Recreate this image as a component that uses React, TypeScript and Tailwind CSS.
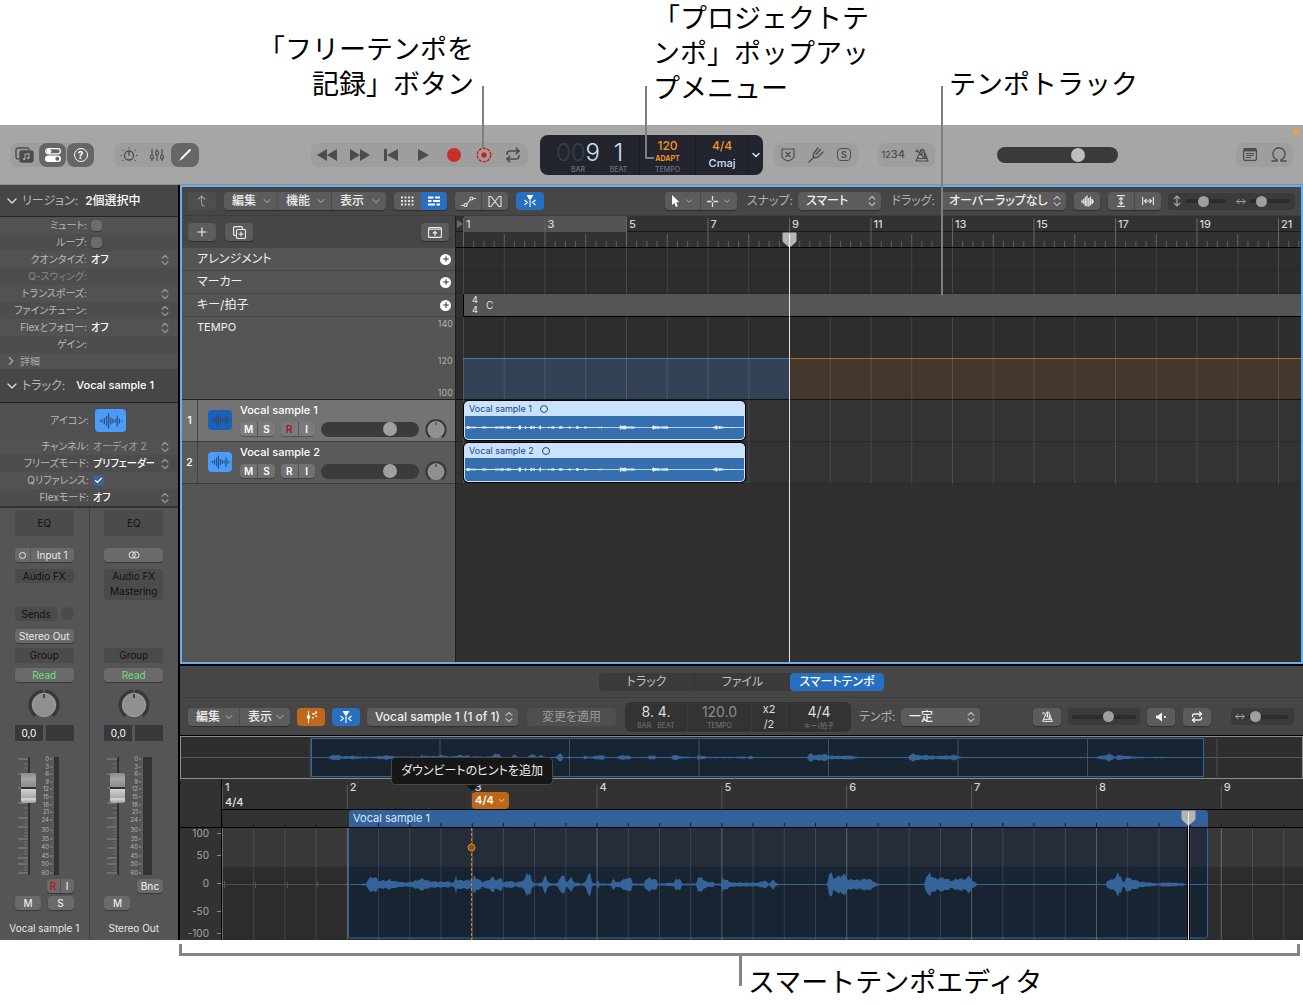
import React from "react";
import { Check, ChevronDown, ChevronRight, ChevronsUpDown, Plus, Repeat } from "lucide-react";

const BAR_WIDTH = 40.75;
const EDITOR_BAR_WIDTH = 124.85;

// [x, amplitude] pairs of the recorded audio, in editor pixels
const envelope: [number, number][] = [
  [128, 0], [144, 1], [146, 5], [150, 8], [154, 7], [157, 4], [163, 4], [168, 5], [174, 3], [186, 2], [193, 4],
  [200, 6], [206, 4], [212, 3], [226, 3], [231, 2], [233, 4], [234, 13], [235, 5], [240, 4], [249, 5], [250, 4],
  [252, 8], [256, 6], [260, 3], [266, 4], [270, 8], [274, 5], [280, 6], [281, 2], [288, 4], [293, 2], [298, 3],
  [302, 5], [305, 11], [308, 12], [310, 3], [314, 1], [320, 2], [323, 9], [327, 2], [330, 1], [336, 2], [339, 10],
  [342, 9], [344, 2], [349, 7], [353, 2], [360, 1], [363, 2], [366, 11], [368, 12], [370, 2], [374, 1], [376, 4],
  [378, 1], [389, 1], [391, 7], [394, 2], [400, 4], [404, 7], [409, 6], [411, 1], [422, 1], [423, 5], [428, 7],
  [434, 5], [436, 1], [452, 2], [454, 6], [458, 6], [460, 1], [474, 1], [476, 8], [481, 6], [486, 2], [490, 3],
  [493, 1], [499, 1], [500, 7], [506, 4], [510, 2], [536, 2], [543, 4], [547, 1], [551, 5], [555, 1], [560, 0],
  [605, 0], [607, 11], [609, 12], [612, 7], [616, 8], [620, 10], [624, 10], [626, 5], [632, 5], [638, 5], [646, 6],
  [651, 4], [655, 1], [668, 0], [702, 0], [704, 8], [708, 11], [711, 8], [714, 6], [718, 7], [724, 6], [730, 4],
  [736, 6], [744, 6], [748, 9], [750, 4], [755, 1], [758, 0], [884, 0], [885, 4], [890, 5], [894, 8], [896, 12],
  [899, 9], [901, 2], [903, 3], [904, 9], [908, 6], [912, 5], [918, 3], [928, 2], [936, 1], [940, 2], [950, 2],
  [962, 1], [966, 0], [986, 0],
];

const wavePath = (offsetX: number, scaleX: number, centerY: number, scaleY: number, minHeight: number) => {
  const top: string[] = [];
  const bottom: string[] = [];
  let segment = 0;
  for (let x = envelope[0][0]; x <= 986; x += 1) {
    while (segment < envelope.length - 2 && x > envelope[segment + 1][0]) segment += 1;
    const [x0, a0] = envelope[segment];
    const [x1, a1] = envelope[segment + 1];
    const amp = a0 + ((a1 - a0) * (x - x0)) / (x1 - x0);
    const noise = 0.75 + (((x * 7919) % 13) / 13) * 0.4;
    const h = Math.max(minHeight, amp * noise * scaleY);
    const px = (offsetX + x * scaleX).toFixed(1);
    top.push(`${px} ${(centerY - h).toFixed(1)}`);
    bottom.unshift(`${px} ${(centerY + h).toFixed(1)}`);
  }
  return `M${top.join("L")}L${bottom.join("L")}Z`;
};

const range = (count: number) => Array.from({ length: count }, (_, i) => i);

const raised = "bg-[#5c5c5c] shadow-[0_1px_1px_rgba(0,0,0,0.35)]";
const sliderBase =
  "m-0 appearance-none rounded-full [&::-webkit-slider-thumb]:appearance-none [&::-webkit-slider-thumb]:rounded-full";

const VoiceIcon = ({ className }: { className: string }) => (
  <svg viewBox="0 0 24 16" className={className} fill="none" stroke="currentColor" strokeLinecap="round" strokeWidth="1.3">
    <path d="M1 8h.2M3.2 7v2M5.4 5.5v5M7.6 3.5v9M9.6 1v14M11.8 5v6M14 6.2v3.6M16.2 7v2M18.2 3v10M20.3 6v4M22.8 7.8v.4" />
  </svg>
);

const ZoomWaveIcon = () => (
  <svg viewBox="0 0 13 13" className="h-[13px] w-[13px]" fill="none" stroke="currentColor" strokeWidth="1.4">
    <path d="M.7 5.500v2M2.500 4v5M4.300 2v9M6 .5v11M7.800 3v8.500M9.500 1.500v9M11.200 4v5M12.600 5.500v2" />
  </svg>
);

const FlexIcon = () => (
  <svg viewBox="0 0 14 14" className="h-[14px] w-[14px]" fill="none" stroke="currentColor" strokeWidth="1.1">
    <path d="M7 2v11" />
    <path d="M4.500 1.500h5L7.800 4.500H6.200z" fill="currentColor" />
    <path d="M1.500 6l3 2.500-3 2.500M12.500 6l-3 2.500 3 2.500" />
  </svg>
);

const MetronomeIcon = ({ className }: { className: string }) => (
  <svg viewBox="0 0 16 16" className={className} fill="none" stroke="currentColor" strokeWidth="1.2" strokeLinejoin="round">
    <path d="M7 2.5h2.5L14 14H2l4-9zM3 11.5h10M10.5 11 2.5 3M1.5 5 4 2.5M8 3v6M10 5l1 6" />
  </svg>
);

const HorizontalArrows = ({ className }: { className: string }) => (
  <svg viewBox="0 0 12 8" className={className} fill="none" stroke="currentColor" strokeWidth="1.2">
    <path d="M1 4h10M4 1 1 4l3 3M8 1l3 3-3 3" />
  </svg>
);

const Knob = ({ className }: { className: string }) => (
  <svg viewBox="0 0 32 32" className={className}>
    <path d="M7.5 28A14 14 0 1 1 24.500 28" fill="none" stroke="#383838" strokeWidth="3" />
    <circle cx="16" cy="17" r="11.500" fill="#909090" stroke="#a5a5a5" strokeWidth="1" />
    <path d="M16 6v4" stroke="#111" strokeWidth="1.2" />
    <path d="M16 1v4" stroke="#3f8a4a" strokeWidth="1" />
  </svg>
);

interface ToolButtonProps {
  label: string;
  className: string;
  children: React.ReactNode;
}

const ToolButton: React.FC<ToolButtonProps> = ({ label, className, children }) => (
  <button type="button" aria-label={label} className={`flex shrink-0 items-center justify-center ${className}`}>
    {children}
  </button>
);

interface PopupProps {
  label: string;
  value: string;
  className: string;
}

const Popup: React.FC<PopupProps> = ({ label, value, className }) => (
  <div className={`flex h-[18px] shrink-0 items-center rounded pr-[2px] pl-2 ${raised} ${className}`}>
    <select aria-label={label} className="h-[18px] min-w-0 flex-1 appearance-none bg-transparent text-xs leading-[18px] font-medium text-[#f0f0f0] outline-none">
      <option>{value}</option>
    </select>
    <ChevronsUpDown className="h-[14px] w-[14px] shrink-0 text-[#b5b5b5]" />
  </div>
);

const MenuButton = ({ name, className }: { name: string; className: string }) => (
  <button type="button" className={`flex h-[18px] items-center justify-between pr-1 pl-2 text-xs font-medium text-[#ececec] ${className}`}>
    {name}
    <ChevronDown className="h-3 w-3 text-[#b5b5b5]" />
  </button>
);

const ControlBar = () => (
  <div className="flex h-[60px] items-center border-b border-[#8f8f8f] bg-[#a6a6a6] pr-[10px] pl-[10px] text-[#4c4c4c]">
    <div className="flex h-6 shrink-0 items-center rounded-lg bg-[#9e9e9e]">
      <ToolButton label="ライブラリ" className="h-6 w-[29px]">
        <svg viewBox="0 0 20 16" className="h-4 w-5" fill="none" stroke="currentColor" strokeWidth="1.4">
          <path d="M4 12H3a2 2 0 0 1-2-2V3a2 2 0 0 1 2-2h9a2 2 0 0 1 2 2" />
          <rect x="5" y="4" width="13" height="11" rx="2" fill="currentColor" />
          <path d="M10 12V7.500l4-1V11" stroke="#a6a6a6" strokeWidth="1.1" />
          <circle cx="9.200" cy="12" r="1.200" fill="#a6a6a6" stroke="none" />
          <circle cx="13.200" cy="11" r="1.200" fill="#a6a6a6" stroke="none" />
        </svg>
      </ToolButton>
      <ToolButton label="インスペクタ" className="h-6 w-[27px] rounded-lg bg-[#666] text-white">
        <svg viewBox="0 0 16 14" className="h-[14px] w-4">
          <rect x=".7" y=".7" width="14.600" height="5.200" rx="2.600" fill="none" stroke="currentColor" strokeWidth="1.2" />
          <circle cx="4" cy="3.300" r="2.300" fill="currentColor" />
          <rect x="0" y="7.500" width="16" height="6.500" rx="3.200" fill="currentColor" />
          <circle cx="12.300" cy="10.700" r="2" fill="#666" />
        </svg>
      </ToolButton>
      <ToolButton label="クイックヘルプ" className="ml-[1px] h-6 w-[27px] rounded-lg bg-[#666] text-white">
        <span className="flex h-[14px] w-[14px] items-center justify-center rounded-full border border-white text-[10px] leading-none font-bold">?</span>
      </ToolButton>
    </div>

    <div className="ml-5 flex h-6 shrink-0 items-center rounded-lg bg-[#9e9e9e]">
      <ToolButton label="スマートコントロール" className="h-6 w-[29px]">
        <svg viewBox="0 0 18 16" className="h-4 w-[18px]" fill="none" stroke="currentColor" strokeWidth="1.3" strokeLinecap="round">
          <circle cx="9" cy="8.500" r="4.500" />
          <path d="M9 4v4.500M1.200 8.500h.1M16.700 8.500h.1M3 3.200h.1M15 3.200h.1M9 1h.1M3 13.500h.1M15 13.500h.1" />
        </svg>
      </ToolButton>
      <ToolButton label="ミキサー" className="h-6 w-[28px]">
        <svg viewBox="0 0 16 16" className="h-4 w-4" fill="#9e9e9e" stroke="currentColor" strokeWidth="1.2">
          <path d="M3 2v12M8 2v12M13 2v12" />
          <ellipse cx="3" cy="10" rx="1.500" ry="2" />
          <ellipse cx="8" cy="6" rx="1.500" ry="2" />
          <ellipse cx="13" cy="10" rx="1.500" ry="2" />
        </svg>
      </ToolButton>
      <ToolButton label="エディタ" className="h-6 w-[28px] rounded-lg bg-[#666] text-white">
        <svg viewBox="0 0 14 14" className="h-[14px] w-[14px]" stroke="currentColor" strokeLinecap="round">
          <path d="M3.500 10.500 12 2" strokeWidth="2" />
          <path d="m1.800 12.200.8-.8" strokeWidth="1" />
        </svg>
      </ToolButton>
    </div>

    <div className="ml-28 flex h-6 w-[217px] shrink-0 items-center rounded-lg bg-[#9e9e9e]">
      <ToolButton label="巻き戻し" className="h-6 w-8">
        <svg viewBox="0 0 20 12" className="h-3 w-5" fill="currentColor"><path d="M10 0v12L0 6zM20 0v12L10 6z" /></svg>
      </ToolButton>
      <ToolButton label="早送り" className="h-6 w-[33px]">
        <svg viewBox="0 0 20 12" className="h-3 w-5" fill="currentColor"><path d="M0 0v12l10-6zM10 0v12l10-6z" /></svg>
      </ToolButton>
      <ToolButton label="先頭へ" className="h-6 w-[30px]">
        <svg viewBox="0 0 14 12" className="h-3 w-[14px]" fill="currentColor"><path d="M0 0h3v12H0zM14 0v12L3 6z" /></svg>
      </ToolButton>
      <ToolButton label="再生" className="h-6 w-[33px]">
        <svg viewBox="0 0 12 12" className="h-3 w-3" fill="currentColor"><path d="M1 0v12l11-6z" /></svg>
      </ToolButton>
      <ToolButton label="録音" className="h-6 w-[30px]">
        <span className="h-[14px] w-[14px] rounded-full bg-[#cd2d27]" />
      </ToolButton>
      <ToolButton label="フリーテンポを記録" className="h-6 w-[29px]">
        <svg viewBox="0 0 16 16" className="h-4 w-4" fill="none" stroke="#cd2019">
          <circle cx="8" cy="8" r="6.700" strokeWidth="1.4" strokeDasharray="3.2 1.1" />
          <circle cx="8" cy="8" r="2.700" fill="#cd2019" stroke="none" />
        </svg>
      </ToolButton>
      <ToolButton label="サイクル" className="h-6 w-[29px]">
        <Repeat className="h-4 w-4" strokeWidth={2.4} />
      </ToolButton>
    </div>

    <div className="ml-3 flex h-10 w-[223px] shrink-0 rounded-lg bg-[#22252e] text-[#d3e0f5]">
      <div className="flex w-[100px] justify-end border-r border-[#1a1c23]">
        <div className="flex flex-col items-end">
          <span className="mt-[5px] text-2xl leading-[26px] font-light"><span className="text-[#3a3e49]">00</span>9</span>
          <span className="pr-[15px] text-[7px] leading-[7px] font-medium text-[#6a7282]">BAR</span>
        </div>
        <div className="flex w-[37px] flex-col items-center">
          <span className="mt-[5px] text-2xl leading-[26px] font-light">1</span>
          <span className="text-[7px] leading-[7px] font-medium text-[#6a7282]">BEAT</span>
        </div>
        <div className="w-[2px]" />
      </div>
      <div className="flex w-[56px] flex-col items-center border-r border-[#1a1c23] pt-[3px]">
        <span className="text-xs leading-4 font-medium text-[#f39325]">120</span>
        <button type="button" className="text-[7px] leading-[9px] font-bold text-[#f39325]">ADAPT</button>
        <span className="pt-[3px] text-[7px] leading-[7px] font-medium text-[#6a7282]">TEMPO</span>
      </div>
      <div className="flex w-[53px] flex-col items-center border-r border-[#1a1c23] pt-[3px]">
        <span className="text-xs leading-4 font-medium text-[#f39325]">4/4</span>
        <span className="pt-[1px] text-[11px] leading-[17px] font-medium">Cmaj</span>
      </div>
      <ToolButton label="表示モード" className="w-[14px]">
        <ChevronDown className="h-3 w-3" strokeWidth={3} />
      </ToolButton>
    </div>

    <div className="ml-[11px] flex h-6 w-[84px] shrink-0 items-center justify-around rounded-lg bg-[#9e9e9e]">
      <ToolButton label="リプレース" className="h-6 w-6">
        <svg viewBox="0 0 14 14" className="h-[14px] w-[14px]" fill="none" stroke="currentColor" strokeWidth="1.2">
          <path d="M1 1h12v7q0 3-6 5-6-2-6-5zM4.500 4l5 5M9.500 4l-5 5" />
        </svg>
      </ToolButton>
      <ToolButton label="チューナー" className="h-6 w-6">
        <svg viewBox="0 0 16 16" className="h-4 w-4" fill="none" stroke="currentColor" strokeWidth="1.4" strokeLinecap="round">
          <path d="M1 15l5-5M10 1 6 6q-1.500 2.500 0 4t4 0l5-5M12.500 2.500 8 7.500" />
        </svg>
      </ToolButton>
      <ToolButton label="ソロ" className="h-6 w-6">
        <span className="flex h-[13px] w-[14px] items-center justify-center rounded-sm border border-[#4c4c4c] text-[9px] leading-none font-semibold">S</span>
      </ToolButton>
    </div>

    <div className="ml-5 flex h-6 w-[57px] shrink-0 items-center justify-around rounded-lg bg-[#9e9e9e]">
      <ToolButton label="カウントイン" className="h-6 w-7">
        <span className="text-[9px] font-medium">12<span className="text-[11px]">34</span></span>
      </ToolButton>
      <ToolButton label="メトロノーム" className="h-6 w-6">
        <MetronomeIcon className="h-4 w-4" />
      </ToolButton>
    </div>

    <input
      type="range"
      aria-label="マスター音量"
      defaultValue={69}
      className={`ml-[62px] h-4 w-[121px] shrink-0 bg-[#3a3a3a] ${sliderBase} [&::-webkit-slider-thumb]:h-[14px] [&::-webkit-slider-thumb]:w-[14px] [&::-webkit-slider-thumb]:bg-[#bfbfbf]`}
    />

    <div className="ml-auto flex h-6 w-[57px] shrink-0 items-center justify-around rounded-lg bg-[#9e9e9e]">
      <ToolButton label="リスト" className="h-6 w-6">
        <svg viewBox="0 0 14 13" className="h-[13px] w-[14px]" fill="none" stroke="currentColor" strokeWidth="1.2">
          <rect x=".6" y=".6" width="12.800" height="11.800" rx="1.500" />
          <path d="M1 2.200h12" strokeWidth="2.4" />
          <path d="M3 5.500h8M3 7.500h8M3 9.500h5" strokeWidth="1" />
        </svg>
      </ToolButton>
      <ToolButton label="ループブラウザ" className="h-6 w-6">
        <svg viewBox="0 0 16 15" className="h-[15px] w-4" fill="none" stroke="currentColor" strokeWidth="1.3" strokeLinecap="round">
          <path d="M1 14h4.500q1 0 .5-1.200a6.200 6.200 0 1 1 4 0q-.5 1.200.5 1.200H15" />
        </svg>
      </ToolButton>
    </div>
  </div>
);

const InspectorSelect = ({ label, value, dim }: { label: string; value?: string; dim?: boolean }) => (
  <>
    <select
      id={label}
      defaultValue={value ?? ""}
      className={`h-[17px] min-w-0 flex-1 appearance-none bg-transparent text-[10px] leading-[17px] outline-none ${dim ? "text-[#a0a0a0]" : "font-medium text-white"}`}
    >
      <option>{value ?? ""}</option>
    </select>
    <ChevronsUpDown className="h-[14px] w-[14px] shrink-0 text-[#999]" />
  </>
);

const InspectorRow = ({ label, wide, children }: { label: string; wide?: boolean; children?: React.ReactNode }) => (
  <div className="flex h-[17px] items-center gap-1 pr-[6px] odd:bg-[#525252] even:bg-[#4d4d4d]">
    <label htmlFor={label} className={`shrink-0 text-right whitespace-nowrap ${wide ? "w-[89px]" : "w-[87px]"} ${label === "Q-スウィング" ? "text-[#858585]" : "text-[#b9b9b9]"}`}>
      {label}:
    </label>
    {children}
  </div>
);

const Inspector = () => (
  <div className="bg-[#505050] text-[10px]">
    <div className="flex h-8 items-center border-b border-[#222] bg-[#464646] pl-1 text-xs">
      <ChevronDown className="h-4 w-4 text-[#ddd]" />
      <span className="pl-[2px] text-[#b9b9b9]">リージョン:</span>
      <span className="pl-[7px] font-medium text-white">2個選択中</span>
    </div>
    <div>
      {["ミュート", "ループ"].map((label) => (
        <InspectorRow key={label} label={label}>
          <input id={label} type="checkbox" className="h-[11px] w-[11px] appearance-none rounded-sm bg-[#6c6c6c] shadow-[0_1px_1px_rgba(0,0,0,0.3)]" />
        </InspectorRow>
      ))}
      <InspectorRow label="クオンタイズ"><InspectorSelect label="クオンタイズ" value="オフ" /></InspectorRow>
      <InspectorRow label="Q-スウィング" />
      <InspectorRow label="トランスポーズ"><InspectorSelect label="トランスポーズ" /></InspectorRow>
      <InspectorRow label="ファインチューン"><InspectorSelect label="ファインチューン" /></InspectorRow>
      <InspectorRow label="Flexとフォロー"><InspectorSelect label="Flexとフォロー" value="オフ" /></InspectorRow>
      <InspectorRow label="ゲイン" />
      <button type="button" className="flex h-4 w-full items-center gap-[2px] bg-[#525252] pl-1 text-[#aaa]">
        <ChevronRight className="h-[14px] w-[14px]" />
        詳細
      </button>
    </div>
    <div className="flex h-[34px] items-center border-b border-[#222] bg-[#464646] pl-1 text-xs">
      <ChevronDown className="h-4 w-4 text-[#ddd]" />
      <span className="pl-[2px] text-[#b9b9b9]">トラック:</span>
      <span className="pl-[11px] text-[11px] font-medium text-white">Vocal sample 1</span>
    </div>
    <div className="flex h-[35px] items-center gap-[6px]">
      <span className="w-[89px] text-right text-[#b9b9b9]">アイコン:</span>
      <ToolButton label="アイコン" className="h-[23px] w-[31px] rounded-sm bg-[#4b9cf8] text-[#2c4f86]">
        <VoiceIcon className="h-4 w-6" />
      </ToolButton>
    </div>
    <div>
      <InspectorRow label="チャンネル" wide><InspectorSelect label="チャンネル" value="オーディオ 2" dim /></InspectorRow>
      <InspectorRow label="フリーズモード" wide><InspectorSelect label="フリーズモード" value="プリフェーダー" /></InspectorRow>
      <InspectorRow label="Qリファレンス" wide>
        <span className="grid h-[11px] w-[11px] place-items-center">
          <input id="Qリファレンス" type="checkbox" defaultChecked className="col-start-1 row-start-1 h-[11px] w-[11px] appearance-none rounded-sm bg-[#3a6396]" />
          <Check className="pointer-events-none col-start-1 row-start-1 h-[9px] w-[9px] text-white" strokeWidth={3} />
        </span>
      </InspectorRow>
      <InspectorRow label="Flexモード" wide><InspectorSelect label="Flexモード" value="オフ" /></InspectorRow>
    </div>
  </div>
);

const meterMarks: [string, number][] = [
  ["0", 2], ["3", 10], ["6", 17], ["9", 25], ["12", 32], ["15", 40], ["18", 48], ["21", 55],
  ["24", 63], ["30", 73], ["35", 82], ["40", 90], ["45", 99], ["50", 107], ["60", 116],
];
const faderMarks = [2, 17, 31, 46, 61, 70, 82, 91, 101, 107, 116];
const faderSmallMarks = [7, 11, 37, 41, 51, 56, 64, 67, 73, 76, 79, 85, 88, 94, 97, 104, 110, 113];

const stripButton = "flex h-[14px] items-center justify-center rounded-sm text-[10px] leading-none";
const stripRaised = "bg-[#6a6a6a] shadow-[0_1px_1px_rgba(0,0,0,0.35)]";

const ChannelStrip = ({ name, master }: { name: string; master?: boolean }) => (
  <div className="flex w-[89px] flex-col px-[15px] pt-[2px] pb-[5px] text-[#e8e8e8]">
    <button type="button" className="h-[26px] bg-[#4b4b4b] text-[10px] text-[#111]">EQ</button>
    <div className={`mt-3 ${stripButton} ${stripRaised}`}>
      {master ? (
        <ToolButton label="ステレオ" className="h-[14px] flex-1">
          <svg viewBox="0 0 12 8" className="h-2 w-3" fill="none" stroke="currentColor"><circle cx="4.200" cy="4" r="3.200" /><circle cx="7.800" cy="4" r="3.200" /></svg>
        </ToolButton>
      ) : (
        <>
          <ToolButton label="モノラル" className="h-[14px] w-4 border-r border-[#555]">
            <span className="h-[7px] w-[7px] rounded-full border border-[#e8e8e8]" />
          </ToolButton>
          <button type="button" className="flex-1">Input 1</button>
        </>
      )}
    </div>
    <div className="mt-[7px] flex h-[38px] flex-col items-stretch">
      <button type="button" className={`bg-[#4b4b4b] text-[10px] leading-[14px] text-[#111] ${master ? "rounded-t-sm" : "rounded-sm"}`}>Audio FX</button>
      {master && <button type="button" className="rounded-b-sm bg-[#4b4b4b] text-[10px] leading-[17px] text-[#111]">Mastering</button>}
    </div>
    <div className="flex h-[14px] justify-between">
      {!master && (
        <>
          <button type="button" className="w-[42px] rounded-sm bg-[#4b4b4b] text-[10px] leading-[14px] text-[#111]">Sends</button>
          <span className="h-[13px] w-[13px] rounded-full bg-[#4b4b4b]" />
        </>
      )}
    </div>
    <div className="mt-2 h-[14px]">
      {!master && <button type="button" className={`w-full ${stripButton} ${stripRaised} whitespace-nowrap`}>Stereo Out</button>}
    </div>
    <button type="button" className="mt-[5px] h-[15px] bg-[#4b4b4b] text-[10px] leading-[15px] text-[#111]">Group</button>
    <button type="button" className={`mt-[5px] ${stripButton} ${stripRaised} text-[#6ce07c]`}>Read</button>
    <Knob className="mt-[6px] h-[32px] w-[32px] self-center" />
    <div className="mt-[5px] flex h-4 gap-[3px] text-[10px] leading-4">
      <span className="flex-1 bg-[#383838] text-center text-white">0,0</span>
      <span className="flex-1 bg-[#383838]" />
    </div>
    <div className="mt-4 flex h-[118px]">
      <svg viewBox="0 0 10 118" className="ml-[3px] h-[118px] w-[10px] shrink-0">
        {faderMarks.map((y) => <path key={y} d={`M0 ${y}h10`} stroke="#8a8a8a" strokeWidth="1" />)}
        {faderSmallMarks.map((y) => <path key={y} d={`M6 ${y}h4`} stroke="#757575" strokeWidth="1" />)}
      </svg>
      <input
        type="range"
        aria-label={`${name} 音量`}
        defaultValue={82}
        className="-ml-[7px] h-[118px] w-[15px] shrink-0 appearance-none bg-[linear-gradient(90deg,transparent_7px,#2f2f2f_7px,#2f2f2f_9px,transparent_9px)] [direction:rtl] [writing-mode:vertical-lr] [&::-webkit-slider-thumb]:h-[30px] [&::-webkit-slider-thumb]:w-[15px] [&::-webkit-slider-thumb]:appearance-none [&::-webkit-slider-thumb]:rounded-xs [&::-webkit-slider-thumb]:bg-[linear-gradient(#8a8a8a,#a5a5a5_20%,#8a8a8a_48%,#333_48%,#333_52%,#d5d5d5_52%,#aaa_82%,#d8d8d8_86%,#999)]"
      />
      <svg viewBox="0 -4 17 124" className="-my-[4px] -mb-[2px] ml-[1px] h-[124px] w-[17px] shrink-0">
        {meterMarks.map(([text, y]) => (
          <g key={text}>
            <text x="12" y={y + 2} textAnchor="end" fontSize="6" fill="#b5b5b5">{text}</text>
            <path d={`M13 ${y}h2`} stroke="#9a9a9a" />
          </g>
        ))}
        <path d="M16 0v118" stroke="#777" strokeDasharray="1 1.500" />
      </svg>
      <span className={`bg-[#333] ${master ? "w-[9px]" : "w-[5px]"}`} />
    </div>
    <div className="mt-1 flex h-[14px] justify-end">
      {master ? (
        <button type="button" className={`w-[26px] ${stripButton} ${stripRaised} font-medium`}>Bnc</button>
      ) : (
        <div className={`flex w-[27px] rounded-sm ${stripRaised} text-[10px] leading-[14px] font-medium`}>
          <button type="button" className="flex-1 border-r border-[#555] text-[#c01010]">R</button>
          <button type="button" className="flex-1">I</button>
        </div>
      )}
    </div>
    <div className="mt-[3px] flex justify-between text-[10px] font-medium">
      <button type="button" className={`w-[26px] ${stripButton} ${stripRaised}`}>M</button>
      {!master && <button type="button" className={`w-[26px] ${stripButton} ${stripRaised}`}>S</button>}
    </div>
    <span className="-mx-3 mt-[11px] text-center text-[10px] leading-[14px] whitespace-nowrap">{name}</span>
  </div>
);

const TracksToolbar = () => (
  <div className="flex h-[29px] items-center border-b border-[#3d3d3d] bg-[#464646] pr-[6px] pl-[6px] text-[#e0e0e0]">
    <ToolButton label="上の階層へ" className="h-[18px] w-7 rounded bg-[#4e4e4e] text-[#999]">
      <svg viewBox="0 0 10 12" className="h-3 w-[10px]" fill="none" stroke="currentColor" strokeWidth="1.1">
        <path d="M1 4.500 4.500 1 8 4.500M4.500 1v7q0 3 3.500 3" />
      </svg>
    </ToolButton>
    <div className={`ml-2 flex shrink-0 rounded ${raised}`}>
      <MenuButton name="編集" className="w-[54px] border-r border-[#4c4c4c]" />
      <MenuButton name="機能" className="w-[54px] border-r border-[#4c4c4c]" />
      <MenuButton name="表示" className="w-[54px]" />
    </div>
    <div className={`ml-2 flex shrink-0 rounded ${raised}`}>
      <ToolButton label="グリッド" className="h-[18px] w-[27px]">
        <svg viewBox="0 0 13 10" className="h-[10px] w-[13px]" stroke="currentColor" strokeWidth="2" strokeDasharray="2 1.500">
          <path d="M0 1.500h13M0 5h13M0 8.500h13" />
        </svg>
      </ToolButton>
      <ToolButton label="リージョン" className="h-[18px] w-[26px] rounded-r bg-[#276fbf] text-white">
        <svg viewBox="0 0 12 10" className="h-[10px] w-3" stroke="currentColor" strokeWidth="2">
          <path d="M0 1.500h5.500M7 1.500h5M0 5h3.500M5 5h7M0 8.500h7M8.500 8.500H12" />
        </svg>
      </ToolButton>
    </div>
    <div className={`ml-2 flex shrink-0 rounded ${raised}`}>
      <ToolButton label="オートメーション" className="h-[18px] w-[27px] border-r border-[#4c4c4c]">
        <svg viewBox="0 0 15 11" className="h-[11px] w-[15px]" fill="none" stroke="currentColor" strokeWidth="1.2">
          <path d="M0 9.500h3M5.500 8.500l4-5M11.500 2.500H15" />
          <circle cx="4.500" cy="9" r="1.500" />
          <circle cx="10.500" cy="2.500" r="1.500" />
        </svg>
      </ToolButton>
      <ToolButton label="Flex" className="h-[18px] w-[26px]">
        <svg viewBox="0 0 14 11" className="h-[11px] w-[14px]" fill="none" stroke="currentColor" strokeWidth="1.100">
          <path d="M1 .5v10h2L11 .5h2v10h-2L3 .5z" />
        </svg>
      </ToolButton>
    </div>
    <ToolButton label="キャッチ" className="ml-2 h-[18px] w-7 rounded bg-[#276fbf] text-white"><FlexIcon /></ToolButton>

    <div className="ml-auto flex shrink-0 items-center">
      <div className={`flex rounded ${raised}`}>
        <ToolButton label="ポインタツール" className="h-[18px] w-9 gap-1 border-r border-[#4c4c4c] text-white">
          <svg viewBox="0 0 9 12" className="h-3 w-[9px]" fill="currentColor"><path d="M1 0v10l2.300-2 1.700 4 1.800-.8L5.200 7.300H8.500z" /></svg>
          <ChevronDown className="h-[10px] w-[10px] text-[#b5b5b5]" />
        </ToolButton>
        <ToolButton label="マーキーツール" className="h-[18px] w-9 gap-1">
          <svg viewBox="0 0 11 11" className="h-[11px] w-[11px]" stroke="currentColor" strokeWidth="1.300"><path d="M5.500 0v4.500M5.500 6.500V11M0 5.500h4.500M6.500 5.500H11" /></svg>
          <ChevronDown className="h-[10px] w-[10px] text-[#b5b5b5]" />
        </ToolButton>
      </div>
      <span className="w-[61px] pr-[5px] text-right text-xs text-[#b0b0b0]">スナップ:</span>
      <Popup label="スナップ" value="スマート" className="w-[83px]" />
      <span className="w-[60px] pr-[6px] text-right text-xs text-[#b0b0b0]">ドラッグ:</span>
      <Popup label="ドラッグ" value="オーバーラップなし" className="w-[125px]" />
      <ToolButton label="波形ズーム" className={`ml-2 h-[18px] w-[26px] rounded ${raised}`}><ZoomWaveIcon /></ToolButton>
      <div className={`ml-2 flex rounded ${raised}`}>
        <ToolButton label="縦に自動ズーム" className="h-[18px] w-[27px] border-r border-[#4c4c4c]">
          <svg viewBox="0 0 10 12" className="h-3 w-[10px]" fill="none" stroke="currentColor" strokeWidth="1.200"><path d="M1 .6h8M1 11.400h8M5 2.500v7M3 4.500l2-2 2 2M3 7.500l2 2 2-2" /></svg>
        </ToolButton>
        <ToolButton label="横に合わせてズーム" className="h-[18px] w-[26px]">
          <svg viewBox="0 0 12 10" className="h-[10px] w-3" fill="none" stroke="currentColor" strokeWidth="1.200"><path d="M.6 1v8M11.400 1v8M2.500 5h7M4.500 3l-2 2 2 2M7.500 3l2 2-2 2" /></svg>
        </ToolButton>
      </div>
      <div className="ml-[7px] flex h-[17px] w-[127px] items-center rounded bg-[#3b3b3b] text-[#a5a5a5]">
        <HorizontalArrows className="ml-[3px] h-2 w-3 rotate-90" />
        <input type="range" aria-label="縦ズーム" defaultValue={40} className={`ml-[3px] h-1 w-10 bg-[#2c2c2c] ${sliderBase} [&::-webkit-slider-thumb]:h-[11px] [&::-webkit-slider-thumb]:w-[11px] [&::-webkit-slider-thumb]:bg-[#9f9f9f]`} />
        <HorizontalArrows className="ml-[10px] h-[7px] w-[10px]" />
        <input type="range" aria-label="横ズーム" defaultValue={20} className={`ml-1 h-1 w-10 bg-[#2c2c2c] ${sliderBase} [&::-webkit-slider-thumb]:h-[11px] [&::-webkit-slider-thumb]:w-[11px] [&::-webkit-slider-thumb]:bg-[#9f9f9f]`} />
      </div>
    </div>
  </div>
);

interface Track {
  number: number;
  name: string;
  selected: boolean;
}

const tracks: Track[] = [
  { number: 1, name: "Vocal sample 1", selected: true },
  { number: 2, name: "Vocal sample 2", selected: false },
];

const smallToggle = "h-[14px] text-[10px] leading-[14px] font-semibold";

const TrackHeader: React.FC<Track> = ({ number, name, selected }) => (
  <div className={`flex h-[42px] items-stretch border-b border-[#3a3a3a] text-white ${selected ? "bg-[#737373]" : "bg-[#5a5a5a]"}`}>
    <span className="flex w-4 items-center justify-center border-r border-[#444] text-[11px] font-medium">{number}</span>
    <div className={`mt-[10px] ml-[10px] flex h-5 w-6 shrink-0 items-center justify-center rounded-sm ${selected ? "bg-[#1763bd] text-[#38485c]" : "bg-[#4b9cf8] text-[#2c4f86]"}`}>
      <VoiceIcon className="h-[14px] w-[21px]" />
    </div>
    <div className="ml-2 pt-[3px]">
      <p className="text-[11px] leading-[15px] font-medium">{name}</p>
      <div className="flex items-center">
        <div className="flex w-[35px] rounded-sm bg-[#808080]/60 shadow-[0_1px_1px_rgba(0,0,0,0.3)]">
          <button type="button" className={`flex-1 border-r border-[#555] ${smallToggle}`}>M</button>
          <button type="button" className={`flex-1 ${smallToggle}`}>S</button>
        </div>
        <div className="ml-[6px] flex w-[34px] rounded-sm bg-[#808080]/60 shadow-[0_1px_1px_rgba(0,0,0,0.3)]">
          <button type="button" className={`flex-1 border-r border-[#555] ${smallToggle} ${selected ? "text-[#b01414]" : ""}`}>R</button>
          <button type="button" className={`flex-1 ${smallToggle}`}>I</button>
        </div>
        <input
          type="range"
          aria-label={`${name} 音量`}
          defaultValue={74}
          className={`ml-[6px] h-[15px] w-[98px] bg-[#3b3b3b] ${sliderBase} [&::-webkit-slider-thumb]:h-[14px] [&::-webkit-slider-thumb]:w-[14px] [&::-webkit-slider-thumb]:bg-[#a0a0a0]`}
        />
        <Knob className="ml-[6px] h-[22px] w-[22px]" />
      </div>
    </div>
  </div>
);

const TrackList = () => (
  <div className="flex w-[274px] shrink-0 flex-col border-r border-[#1e1e1e] bg-[#555] text-xs text-[#f0f0f0]">
    <div className="flex h-8 items-center bg-[#464646] px-[6px]">
      <ToolButton label="トラックを追加" className={`h-[18px] w-7 rounded ${raised}`}><Plus className="h-[14px] w-[14px]" /></ToolButton>
      <ToolButton label="トラックを複製" className={`ml-[9px] h-[18px] w-7 rounded ${raised}`}>
        <svg viewBox="0 0 13 13" className="h-[13px] w-[13px]" fill="none" stroke="currentColor" strokeWidth="1.100">
          <path d="M3 9.500H2q-1.400 0-1.400-1.400V2Q.6.600 2 .6h6Q9.500.600 9.500 2v1M8 5.500v5M5.500 8h5" />
          <rect x="3.500" y="3.500" width="9" height="9" rx="1.500" />
        </svg>
      </ToolButton>
      <ToolButton label="グローバルトラック" className={`ml-auto h-[18px] w-7 rounded ${raised}`}>
        <svg viewBox="0 0 14 11" className="h-[11px] w-[14px]" fill="none" stroke="currentColor" strokeWidth="1.100">
          <rect x=".6" y=".6" width="12.800" height="9.800" rx="1" />
          <path d="M1 2.300h12M7 9V4.500M5 6.500l2-2 2 2" />
        </svg>
      </ToolButton>
    </div>
    {["アレンジメント", "マーカー", "キー/拍子"].map((name) => (
      <div key={name} className="flex h-[23px] items-center justify-between border-b border-[#464646] pr-1 pl-[15px]">
        {name}
        <ToolButton label={`${name}を追加`} className="h-[11px] w-[11px] rounded-full bg-white text-[#333]">
          <Plus className="h-2 w-2" strokeWidth={3} />
        </ToolButton>
      </div>
    ))}
    <div className="flex h-[83px] justify-between border-b border-[#222] pr-[2px] pl-[15px] text-[11px]">
      <span className="leading-5">TEMPO</span>
      <div className="flex flex-col text-[9px] leading-[12px] text-[#b0b0b0]">
        <span className="pt-[1px]">140</span>
        <span className="pt-[25px]">120</span>
        <span className="pt-[20px]">100</span>
      </div>
    </div>
    {tracks.map((track) => <TrackHeader key={track.number} {...track} />)}
  </div>
);

const Playhead = ({ className }: { className: string }) => (
  <svg viewBox="0 0 15 16" className={className}>
    <path d="M1.500.5h12q1 0 1 1v7q0 1-1 2L9 14.500q-1.500 1.500-3 0l-4.500-4q-1-1-1-2v-7q0-1 1-1z" fill="#b5b5b5" />
    <path d="M7.500 2v14" stroke="#eee" />
  </svg>
);

const Timeline = () => (
  <div className="relative min-w-0 flex-1 overflow-hidden bg-[#303030]">
    <div className="relative h-8 border-b border-black bg-[#323232]">
      <div className="flex h-4 border-b border-black/50">
        <svg viewBox="0 0 8 16" className="h-4 w-2"><path d="M1 4v8l6-4z" fill="#6a6a6a" /></svg>
        <div className="h-4 w-[163px] bg-[#535353]" />
      </div>
      <svg className="absolute inset-0 h-full w-full">
        {range(84).map((i) => (
          <path
            key={i}
            d={`M${7.5 + i * (BAR_WIDTH / 4)} ${i % 8 === 0 ? 2 : i % 4 === 0 ? 18 : 25}V32`}
            stroke={i % 4 === 0 ? "#666" : "#606060"}
          />
        ))}
      </svg>
      {range(11).map((i) => (
        <span
          key={i}
          className="absolute top-0 text-[11px] leading-4 font-medium text-[#d5d5d5]"
          style={{ left: 10 + i * BAR_WIDTH * 2 }}
        >
          {i * 2 + 1}
        </span>
      ))}
    </div>
    <div className="h-[23px] border-b border-[#262626] bg-[#2d2d2d]" />
    <div className="h-[23px] border-b border-[#262626] bg-[#2d2d2d]" />
    <div className="relative z-10 ml-[7px] flex h-[23px] items-center gap-2 border-b border-l border-black bg-[#555] pl-2 text-[10px] text-[#ddd]">
      <span className="flex flex-col text-[9px] leading-[10px] font-medium"><span>4</span><span>4</span></span>
      C
    </div>
    <div className="flex h-[83px] border-b border-[#111] bg-[#2d2d2d] pt-[41px] pl-[7px]">
      <div className="w-[326px] border-t border-[#3f76bb] bg-[#334355]" />
      <div className="flex-1 border-t border-[#b06e10] bg-[#44382e]" />
    </div>
    {tracks.map((track) => (
      <div key={track.number} className="h-[42px] border-b border-[#292929] bg-[#333] pt-[1px] pl-2">
        <div className="relative z-10 h-[39px] w-[281px] overflow-hidden rounded border border-[#c9e2ff] bg-[#366fae] outline outline-black">
          <div className="flex h-[14px] items-center gap-2 bg-[#c9e2ff] pl-1 text-[9px] text-[#24476f]">
            {track.name}
            <span className="h-2 w-2 rounded-full border border-[#24476f]" />
          </div>
          <svg className="block h-6 w-full">
            <path d="M0 11.500h281" stroke="#a9c9ee" strokeWidth="0.8" />
            <path d={wavePath(-47, 0.333, 11.5, 0.2, 0.3)} fill="#dcebff" />
          </svg>
        </div>
      </div>
    ))}
    <svg className="pointer-events-none absolute top-8 left-0 h-[236px] w-full">
      {range(21).map((i) => (
        <path key={i} d={`M${7.5 + i * BAR_WIDTH} 0V236`} stroke="#fff" strokeOpacity={i % 2 === 0 ? 0.13 : 0.1} />
      ))}
    </svg>
    <div className="absolute top-4 left-[326px] z-20 flex h-full w-[15px] flex-col items-center">
      <Playhead className="h-4 w-[15px] shrink-0" />
      <span className="w-[1px] flex-1 bg-[#e0e0e0]" />
    </div>
  </div>
);

const EditorToolbar = () => (
  <div className="flex h-[38px] items-center border-b border-black pr-[9px] pl-2 text-[#f0f0f0]">
    <div className={`flex shrink-0 rounded ${raised}`}>
      <MenuButton name="編集" className="w-[52px] border-r border-[#4c4c4c]" />
      <MenuButton name="表示" className="w-[50px]" />
    </div>
    <ToolButton label="ヒント編集" className="ml-[7px] h-[18px] w-7 rounded bg-[#c0691c] text-white">
      <svg viewBox="0 0 14 12" className="h-3 w-[14px]" fill="currentColor">
        <path d="M4 0h1v12H4zM4.500 3 6.500 6l-2 3-2-3zM8.500 2h2v2h-2zM11 .5h2v2h-2zM8 6h1.500v1.500H8zM11.500 4.500H13V6h-1.500z" />
      </svg>
    </ToolButton>
    <ToolButton label="キャッチ" className="ml-[7px] h-[18px] w-7 rounded bg-[#276fbf] text-white"><FlexIcon /></ToolButton>
    <Popup label="リージョン" value="Vocal sample 1 (1 of 1)" className="ml-[7px] w-[151px]" />
    <button type="button" className="ml-[9px] h-[18px] w-[89px] shrink-0 rounded bg-[#4f4f4f] text-xs leading-[18px] text-[#9a9a9a]">変更を適用</button>

    <div className="ml-[9px] flex h-[30px] w-[226px] shrink-0 rounded-md bg-[#333] text-[#ddd]">
      <div className="flex w-[63px] flex-col items-center border-r border-[#3d3d3d]">
        <span className="text-sm leading-[19px]">8. 4.</span>
        <span className="flex gap-[6px] text-[7px] leading-[10px] text-[#777]"><span>BAR</span><span>BEAT</span></span>
      </div>
      <div className="flex w-[64px] flex-col items-center border-r border-[#3d3d3d]">
        <span className="text-sm leading-[19px] text-[#8b8b8b]">120.0</span>
        <span className="text-[7px] leading-[10px] text-[#777]">TEMPO</span>
      </div>
      <div className="flex w-[35px] flex-col border-r border-[#3d3d3d] text-[11px] leading-[15px]">
        <button type="button">x2</button>
        <button type="button">/2</button>
      </div>
      <div className="flex w-[64px] flex-col items-center">
        <span className="text-sm leading-[19px]">4/4</span>
        <span className="text-[7px] leading-[10px] text-[#777]">キー/拍子</span>
      </div>
    </div>
    <span className="ml-2 w-[42px] shrink-0 text-xs whitespace-nowrap text-[#b0b0b0]">テンポ:</span>
    <Popup label="テンポ" value="一定" className="w-[79px]" />

    <div className="ml-auto flex shrink-0 items-center">
      <ToolButton label="メトロノーム" className={`h-[18px] w-7 rounded ${raised}`}><MetronomeIcon className="h-[13px] w-[13px]" /></ToolButton>
      <div className="ml-[7px] flex h-[17px] w-[72px] items-center justify-center rounded bg-[#3b3b3b]">
        <input type="range" aria-label="メトロノーム音量" defaultValue={58} className={`h-1 w-16 bg-[#2c2c2c] ${sliderBase} [&::-webkit-slider-thumb]:h-[11px] [&::-webkit-slider-thumb]:w-[11px] [&::-webkit-slider-thumb]:bg-[#9f9f9f]`} />
      </div>
      <ToolButton label="試聴" className={`ml-[7px] h-[18px] w-7 rounded ${raised}`}>
        <svg viewBox="0 0 12 10" className="h-[10px] w-3" fill="currentColor"><path d="M1 3.500h2L7 .5v9l-4-3H1zM9 4h1.800v2H9z" /></svg>
      </ToolButton>
      <ToolButton label="サイクル" className={`ml-2 h-[18px] w-7 rounded ${raised}`}><Repeat className="h-3 w-3" strokeWidth={2.6} /></ToolButton>
      <div className="ml-5 flex h-[17px] w-[63px] items-center rounded bg-[#3b3b3b] text-[#a5a5a5]">
        <HorizontalArrows className="ml-1 h-[7px] w-[10px]" />
        <input type="range" aria-label="横ズーム" defaultValue={7} className={`ml-[3px] h-1 w-10 bg-[#2c2c2c] ${sliderBase} [&::-webkit-slider-thumb]:h-[11px] [&::-webkit-slider-thumb]:w-[11px] [&::-webkit-slider-thumb]:bg-[#9f9f9f]`} />
      </div>
    </div>
  </div>
);

const SmartTempoEditor = () => (
  <section className="border-t-2 border-black bg-[#464646]">
    <div className="flex h-8 items-center justify-center border-b border-[#3d3d3d]">
      <div role="tablist" className="flex h-[18px] w-[285px] rounded bg-[#3b3b3b] text-xs text-[#c0c0c0]">
        <button type="button" role="tab" className="flex-1 border-r border-[#333] leading-[18px]">トラック</button>
        <button type="button" role="tab" className="flex-1 leading-[18px]">ファイル</button>
        <button type="button" role="tab" aria-selected="true" className="w-[94px] rounded bg-[#276fbf] leading-[18px] font-medium text-white">スマートテンポ</button>
      </div>
    </div>
    <EditorToolbar />

    <div className="h-[43px] border border-[#8d8d8d] bg-[#2e2e2e] py-[1px]">
      <svg className="block h-[39px] w-full">
        <path d="M0 19.500h1300" stroke="#555" />
        <rect x="130.500" y=".5" width="892" height="38" fill="#182431" stroke="#2f66a8" />
        {range(8).map((i) => <path key={i} d={`M${129.500 + i * 129.500} 0V39`} stroke="#4a4f55" />)}
        <path d={wavePath(-2, 1.038, 19.5, 0.34, 0.6)} fill="#35649b" />
      </svg>
    </div>

    <div className="relative flex h-[161px]">
      <div className="flex w-[42px] shrink-0 flex-col border-r border-black bg-[#323232] text-right text-[10px] text-[#a5a5a5]">
        <div className="h-[49px] border-b border-black" />
        <div className="flex flex-1 flex-col items-end leading-[10px]">
          {[
            { value: "100", gap: "" },
            { value: "50", gap: "mt-3" },
            { value: "0", gap: "mt-[18px]" },
            { value: "-50", gap: "mt-[18px]" },
            { value: "-100", gap: "mt-3" },
          ].map(({ value, gap }) => (
            <span key={value} className={`flex items-center gap-2 ${gap}`}>
              {value}
              <span className="h-[1px] w-1 bg-[#888]" />
            </span>
          ))}
        </div>
      </div>

      <div className="relative min-w-0 flex-1 overflow-hidden">
        <div className="h-[31px] border-b border-black bg-[#323232]" />
        <div className="flex h-[18px] border-b border-black bg-[#323232]">
          <div className="ml-[127px] w-[859px] rounded-t-sm bg-[#33619a] pl-1 text-[11px] leading-4 text-[#dbe8f8]">Vocal sample 1</div>
        </div>
        <svg className="block h-[112px] w-full">
          <rect width="100%" height="112" fill="#2c2c2c" />
          <rect width="100%" height="39" fill="#383838" />
          <path d="M0 56.500h1200" stroke="#4d4d4d" />
          <path d="M2.500 53v7M33.500 54v6M65.500 54v6M95.500 54v5" stroke="#555" />
          <rect x="126.500" y="-4" width="859" height="114" rx="2" fill="#182431" stroke="#2f66a8" />
          <rect x="127" width="858" height="39" fill="#242d39" />
          {range(36).map((i) => (
            <path key={i} d={`M${0.5 + (i * EDITOR_BAR_WIDTH) / 4} 0V112`} stroke="#fff" strokeOpacity={i % 4 === 0 ? 0.27 : 0.12} />
          ))}
          <path d={wavePath(0, 1, 56.5, 1, 0.6)} fill="#35649b" />
          <path d="M249.500 0V112" stroke="#d6850f" strokeDasharray="3 2" />
          <circle cx="249.500" cy="19.500" r="3.500" fill="#8f5310" stroke="#e08a10" />
        </svg>
        <svg className="pointer-events-none absolute inset-x-0 top-0 h-12 w-full">
          {range(36).map((i) => (
            <g key={i}>
              <path d={`M${0.5 + (i * EDITOR_BAR_WIDTH) / 4} 44V48`} stroke="#15202c" />
              {i % 4 === 0 && <path d={`M${0.5 + (i * EDITOR_BAR_WIDTH) / 4} 6V30`} stroke="#5a5a5a" />}
            </g>
          ))}
        </svg>
        {range(9).map((i) => (
          <span
            key={i}
            className="absolute top-0 text-[11px] leading-4 font-medium text-[#d5d5d5]"
            style={{ left: 3 + i * EDITOR_BAR_WIDTH }}
          >
            {i + 1}
          </span>
        ))}
        <span className="absolute top-[15px] left-[3px] text-[11px] leading-4 font-medium text-[#e5e5e5]">4/4</span>
        <button type="button" className="absolute top-[13px] left-[250px] flex h-[17px] w-[37px] items-center justify-center gap-[3px] rounded-sm bg-[#bd6717] text-[11px] font-semibold text-white">
          4/4
          <ChevronDown className="h-[9px] w-[9px]" />
        </button>
        <div className="absolute top-[31px] left-[959px] flex h-full w-[15px] flex-col items-center">
          <Playhead className="h-4 w-[15px] shrink-0" />
          <span className="w-[3px] flex-1 border-x border-black bg-[#ddd]" />
        </div>
      </div>

      <div role="tooltip" className="absolute -top-[22px] left-[211px] z-30 flex w-[162px] flex-col items-center">
        <span className="flex h-[28px] w-full items-center justify-center rounded border border-[#484848] bg-[#171717] text-xs whitespace-nowrap text-[#eee]">
          ダウンビートのヒントを追加
        </span>
        <svg viewBox="0 0 12 6" className="h-[6px] w-3"><path d="M0 0h12L6 6z" fill="#171717" /></svg>
      </div>
    </div>
  </section>
);

const calloutText = "text-[27px] leading-[35px] whitespace-nowrap text-black [font-feature-settings:normal]";

export default function App() {
  return (
    <main className="relative overflow-hidden bg-white [font-family:Inter,'Noto_Sans_CJK_JP',sans-serif] [font-feature-settings:'palt']">
      <div className={`flex h-[125px] ${calloutText}`}>
        <p className="w-[474px] pt-8 text-right">「フリーテンポを<br />記録」ボタン</p>
        <p className="ml-[179px] w-[230px] pt-[1px]">「プロジェクトテ<br />ンポ」ポップアッ<br />プメニュー</p>
        <p className="ml-[66px] pt-[67px]">テンポトラック</p>
      </div>

      <div className="relative">
        <ControlBar />
        <span className="absolute top-1 right-1 h-[6px] w-[6px] rounded-full bg-[#f0a03c]" />
      </div>
      <div className="flex">
        <aside className="flex w-[180px] shrink-0 flex-col border-r-2 border-black bg-[#555]">
          <Inspector />
          <div className="flex flex-1 border-t-2 border-[#333]">
            <ChannelStrip name="Vocal sample 1" />
            <div className="w-[1px] bg-[#3f3f3f]" />
            <ChannelStrip name="Stereo Out" master />
          </div>
        </aside>
        <div className="min-w-0 flex-1">
          <section className="flex h-[479px] flex-col border-2 border-[#6aaef0]">
            <TracksToolbar />
            <div className="flex min-h-0 flex-1">
              <TrackList />
              <Timeline />
            </div>
          </section>
          <SmartTempoEditor />
        </div>
      </div>

      <div className="mt-1 mr-[3px] ml-[179px] h-3 border-x-[3px] border-b-[3px] border-[#858585]" />
      <div className={`flex h-[49px] pl-[739px] ${calloutText}`}>
        <span className="h-[30px] w-[3px] bg-[#858585]" />
        <span className="pt-[9px] pl-[6px]">スマートテンポエディタ</span>
      </div>

      {/* callout lines over the window */}
      <span className="absolute top-[86px] left-[482px] h-[62px] w-[2px] bg-[#7f7f7f]" />
      <span className="absolute top-[86px] left-[645px] h-[73px] w-[9px] border-b-2 border-l-2 border-[#7f7f7f]" />
      <span className="absolute top-[86px] left-[941px] z-30 h-[209px] w-[2px] bg-[#7f7f7f]" />
    </main>
  );
}
